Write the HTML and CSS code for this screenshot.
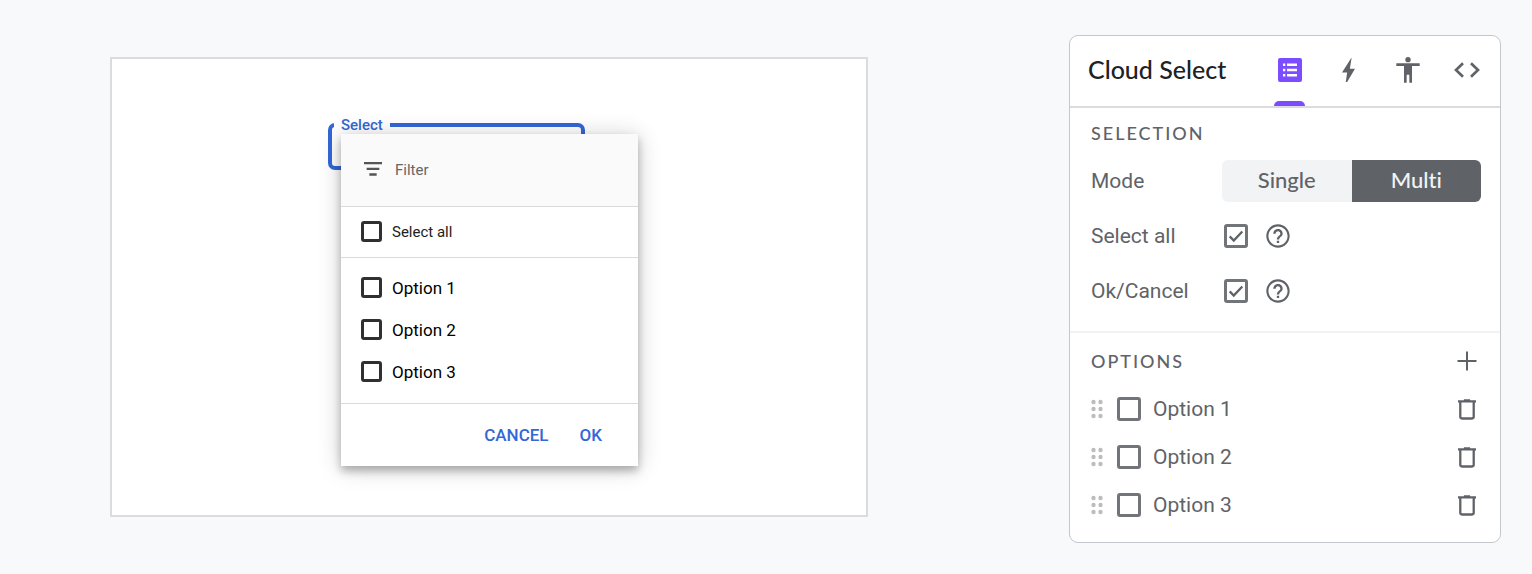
FILE: index.html
```html
<!DOCTYPE html>
<html lang="en">
<head>
<meta charset="utf-8">
<meta name="viewport" content="width=device-width, initial-scale=1">
<title>Cloud Select</title>
<link rel="stylesheet" href="styles.css">
</head>
<body>
<svg class="sprite" aria-hidden="true">
  <symbol id="help" viewBox="0 0 24 24"><path d="M11 18h2v-2h-2v2zm1-16C6.480 2 2 6.480 2 12s4.480 10 10 10 10-4.480 10-10S17.520 2 12 2zm0 18.200c-4.500 0-8.200-3.700-8.200-8.200S7.500 3.800 12 3.800s8.200 3.700 8.200 8.200-3.700 8.200-8.200 8.200zM12 6c-2.210 0-4 1.790-4 4h2c0-1.100.9-2 2-2s2 .9 2 2c0 2-3 1.750-3 5h2c0-2.250 3-2.500 3-5 0-2.210-1.790-4-4-4z"/></symbol>
  <symbol id="drag" viewBox="0 0 12 20"><circle cx="2.500" cy="3" r="2.200"/><circle cx="9.500" cy="3" r="2.200"/><circle cx="2.500" cy="10" r="2.200"/><circle cx="9.500" cy="10" r="2.200"/><circle cx="2.500" cy="17" r="2.200"/><circle cx="9.500" cy="17" r="2.200"/></symbol>
  <symbol id="trash" viewBox="0 0 55 63"><path d="M18 0h19v3h18v7H0V3h18z"/><path d="M7 8v46q0 5 5 5h31q5 0 5-5V8" fill="none" stroke="currentColor" stroke-width="7"/></symbol>
</svg>
<main class="page">
  <section class="stage" aria-label="Preview">
    <div class="picker">
      <fieldset class="field"><legend>Select</legend></fieldset>
      <div class="menu">
        <label class="filter">
          <svg class="filter-icon" viewBox="0 0 54 42" aria-hidden="true"><path d="M0 0h54v7H0zM8 17h38v7H8zM16 34h22v7H16z"/></svg>
          <input type="text" placeholder="Filter" aria-label="Filter">
        </label>
        <div class="menu-all">
          <label class="choice choice-all"><input class="box" type="checkbox">Select all</label>
        </div>
        <div class="menu-list">
          <label class="choice"><input class="box" type="checkbox">Option 1</label>
          <label class="choice"><input class="box" type="checkbox">Option 2</label>
          <label class="choice"><input class="box" type="checkbox">Option 3</label>
        </div>
        <div class="menu-actions">
          <button type="button">CANCEL</button>
          <button type="button">OK</button>
        </div>
      </div>
    </div>
  </section>

  <aside class="panel">
    <header class="panel-head">
      <h1>Cloud Select</h1>
      <nav class="tabs">
        <button class="tab tab-active" type="button" aria-label="Properties"><svg width="24" height="24" viewBox="0 0 24 24"><path fill-rule="evenodd" d="M2 0h20q2 0 2 2v20q0 2-2 2H2q-2 0-2-2V2q0-2 2-2zM5 5.500V8h2.300V5.500zm4 0V8h10V5.500zM5 10.800v2.500h2.300v-2.500zm4 0v2.500h10v-2.500zM5 16v2.500h2.300V16zm4 0v2.500h10V16z"/></svg></button>
        <button class="tab" type="button" aria-label="Actions"><svg width="13" height="24" viewBox="0 0 38 70"><path d="M27 0L0 42h15l-4 28h4L38 31H23L28 0z"/></svg></button>
        <button class="tab" type="button" aria-label="Accessibility"><svg width="24" height="26" viewBox="0 0 70 78"><circle cx="35" cy="8" r="8"/><path d="M0 19h70v8H47v50h-8V53h-8v24h-8V27H0z"/></svg></button>
        <button class="tab" type="button" aria-label="Code"><svg width="26" height="16" viewBox="0 0 78 48"><path d="M27 4L6 24l21 20M51 4l21 20-21 20" fill="none" stroke="currentColor" stroke-width="8"/></svg></button>
      </nav>
    </header>
    <section class="selection">
      <h2>SELECTION</h2>
      <div class="rows">
        <div class="row">
          <span class="name">Mode</span>
          <div class="segments"><button type="button" aria-pressed="false">Single</button><button type="button" aria-pressed="true">Multi</button></div>
        </div>
        <div class="row">
          <label class="name" for="all">Select all</label>
          <input class="box box-large" id="all" type="checkbox" checked>
          <button class="icon-button help" type="button" aria-label="Help on select all"><svg width="28" height="28"><use href="#help"/></svg></button>
        </div>
        <div class="row">
          <label class="name" for="confirm">Ok/Cancel</label>
          <input class="box box-large" id="confirm" type="checkbox" checked>
          <button class="icon-button help" type="button" aria-label="Help on ok and cancel"><svg width="28" height="28"><use href="#help"/></svg></button>
        </div>
      </div>
    </section>
    <section class="options">
      <div class="options-head">
        <h2>OPTIONS</h2>
        <button class="icon-button" type="button" aria-label="Add option"><svg width="20" height="20" viewBox="0 0 20 20"><path d="M10 0.500v19M0.500 10h19" stroke="currentColor" stroke-width="2"/></svg></button>
      </div>
      <div class="option">
        <svg class="drag" aria-hidden="true"><use href="#drag"/></svg>
        <label class="option-name"><input class="box box-large" type="checkbox">Option 1</label>
        <button class="icon-button" type="button" aria-label="Delete option 1"><svg width="18" height="21"><use href="#trash"/></svg></button>
      </div>
      <div class="option">
        <svg class="drag" aria-hidden="true"><use href="#drag"/></svg>
        <label class="option-name"><input class="box box-large" type="checkbox">Option 2</label>
        <button class="icon-button" type="button" aria-label="Delete option 2"><svg width="18" height="21"><use href="#trash"/></svg></button>
      </div>
      <div class="option">
        <svg class="drag" aria-hidden="true"><use href="#drag"/></svg>
        <label class="option-name"><input class="box box-large" type="checkbox">Option 3</label>
        <button class="icon-button" type="button" aria-label="Delete option 3"><svg width="18" height="21"><use href="#trash"/></svg></button>
      </div>
    </section>
  </aside>
</main>
</body>
</html>
```
FILE: styles.css
```css
* { box-sizing: border-box; }
body { margin: 0; background: #f8f9fb; color: #5f6368; font-family: Roboto, "Liberation Sans", sans-serif; }
button { border: 0; padding: 0; background: none; color: inherit; font: inherit; cursor: pointer; }
svg { display: block; fill: currentColor; }
h1, h2 { margin: 0; font-family: Lato, Roboto, sans-serif; }
.sprite { position: absolute; width: 0; height: 0; }

.page { display: grid; grid-template-columns: minmax(380px, 1fr) 432px; align-items: start; column-gap: 201px; padding: 35px 31px 31px 110px; }

.stage { margin-top: 22px; padding: 58px 216px 49px; border: 2px solid #dadce0; background: #fff; }
.picker { position: relative; width: 310px; min-height: 349px; }
.field { width: 257px; height: 53px; margin: 0; padding: 0 2px; border: 4px solid #3367d6; border-radius: 7px; }
.field legend { padding: 0 7px; color: #3367d6; font-size: 15px; font-weight: 500; line-height: 16px; }

.menu { position: absolute; top: 17px; left: 13px; right: 0; background: #fff; box-shadow: 0 5px 8px rgba(0, 0, 0, .25), 0 2px 22px rgba(0, 0, 0, .2); color: #000; font-size: 17px; }
.filter { display: flex; align-items: center; gap: 13px; height: 73px; padding: 0 22px 2px 23px; border-bottom: 1px solid #dadada; background: #fafafa; color: #555; }
.filter-icon { flex: none; width: 18px; height: 14px; }
.filter input { width: 100%; min-width: 0; padding: 2px 0 0; border: 0; outline: 0; background: none; color: #555; font: 15px/20px Roboto, sans-serif; }
.filter input::placeholder { color: #666; opacity: 1; }
.menu-all { padding: 4px 20px 5px; border-bottom: 1px solid #dadada; }
.menu-list { padding: 9px 20px 12px; border-bottom: 1px solid #dadada; }
.menu-list { display: grid; row-gap: 1px; padding-bottom: 11px; }
.choice { display: flex; align-items: center; gap: 10px; height: 41px; }
.choice-all { font-size: 15px; color: #212121; }
.box { flex: none; appearance: none; width: 21px; height: 21px; margin: 0; border: 3px solid #303030; border-radius: 3px; background: #fff; }
.menu-actions { display: flex; justify-content: flex-end; gap: 31px; padding: 21px 36px; color: #3367d6; font-weight: 500; line-height: 20px; }

.panel { border: 1px solid #c4c7cb; border-radius: 9px; background: #fff; font-size: 21px; }
.panel-head { display: flex; justify-content: space-between; padding: 0 18px 0 18px; border-bottom: 2px solid #dadce0; }
h1 { align-self: center; padding-bottom: 4px; color: #202124; font-size: 25px; font-weight: 500; line-height: 30px; }
.tabs { display: flex; gap: 28px; }
.tab { display: grid; place-items: center; width: 31px; height: 70px; padding-bottom: 3px; }
.tab-active { position: relative; color: #7c4dff; }
.tab-active::after { content: ""; position: absolute; right: 0; bottom: 0; left: 0; height: 5px; border-radius: 5px 5px 0 0; background: #7c4dff; }

h2 { font-size: 18px; font-weight: 500; line-height: 20px; letter-spacing: 2px; }
.selection { padding: 15px 19px 19px 21px; border-bottom: 2px solid #f1f3f4; }
.rows { display: grid; gap: 13px; margin-top: 17px; }
.row { display: flex; align-items: center; height: 42px; }
.name { width: 131px; }
.segments { display: grid; flex: 1; grid-template-columns: 1fr 1fr; height: 42px; border-radius: 6px; overflow: hidden; font-family: Lato, Roboto, sans-serif; font-size: 22px; font-weight: 500; font-variant-ligatures: none; }
.segments button { padding-bottom: 3px; background: #f1f3f4; }
.segments button[aria-pressed="true"] { background: #5f6368; color: #f1f3f4; }
.box-large { width: 24px; height: 24px; border-color: #71757a; }
.row .box { margin: 0 16px 0 2px; }
.box:checked { background: url("data:image/svg+xml,%3Csvg xmlns='http://www.w3.org/2000/svg' viewBox='0 0 20 20'%3E%3Cpath d='M3 10.500l4.500 4.500L17 5' fill='none' stroke='%235f6368' stroke-width='2.600'/%3E%3C/svg%3E") center / 18px 18px no-repeat; }
.icon-button { display: grid; place-items: center; width: 28px; height: 28px; }

.options { padding: 4px 19px 13px 21px; }
.options-head, .option { display: flex; align-items: center; justify-content: space-between; height: 48px; }
.option { gap: 14px; }
.drag { flex: none; width: 12px; height: 20px; color: #bdbdbd; }
.option-name { display: flex; flex: 1; align-items: center; gap: 12px; }
```
